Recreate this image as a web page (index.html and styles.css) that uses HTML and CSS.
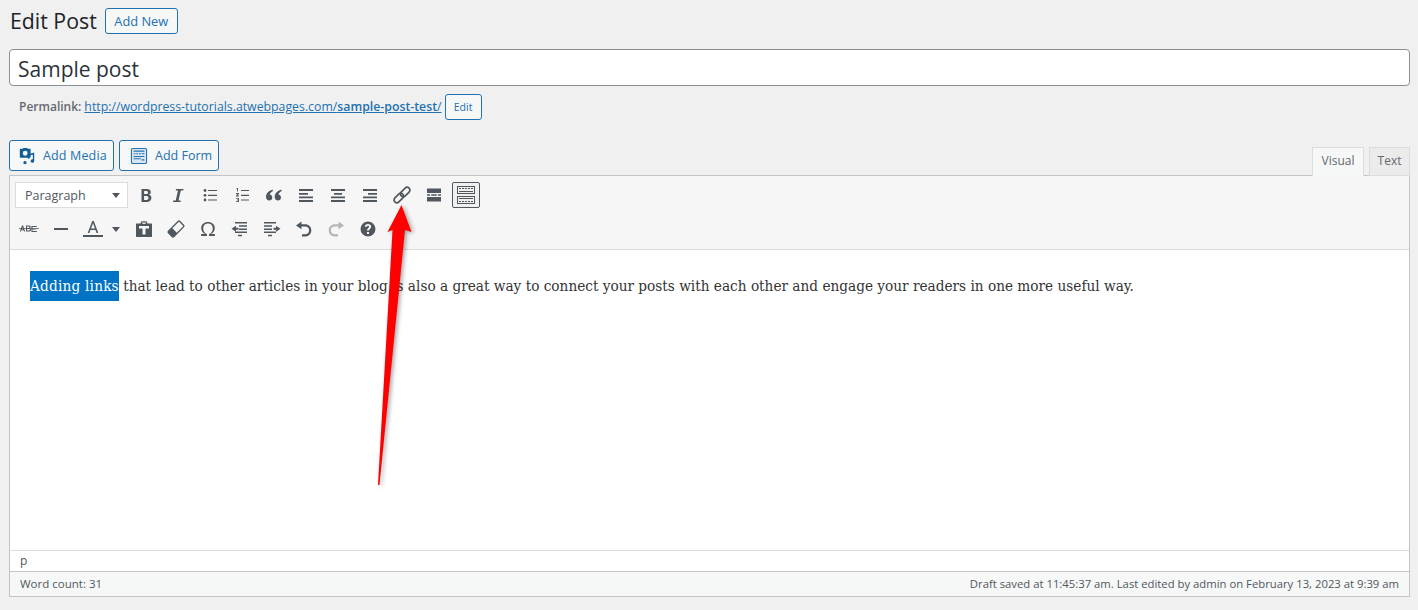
FILE: index.html
```html
<!DOCTYPE html>
<html lang="en">
<head>
<meta charset="utf-8">
<title>Edit Post</title>
<link rel="stylesheet" href="styles.css">
</head>
<body>
<svg class="sprites" width="0" height="0" aria-hidden="true">
  <symbol id="i-bold" viewBox="0 0 20 20"><path fill-rule="evenodd" d="M5.500 4h5.300c2.500 0 4 1.100 4 3.100 0 1.300-.7 2.300-1.900 2.700 1.500.3 2.500 1.400 2.500 3 0 2.600-1.800 4.200-4.500 4.200H5.500zm2.600 2v3h2.100c1.100 0 1.800-.5 1.800-1.500S11.300 6 10.200 6zm0 5v4h2.400c1.300 0 2-.7 2-2s-.7-2-2-2z"/></symbol>
  <symbol id="i-italic" viewBox="0 0 20 20"><path d="M8 4h7.500l-.3 1.500h-2.400L10.500 15.500h2.300l-.3 1.500H5l.3-1.500h2.400L10 5.500H7.700z"/></symbol>
  <symbol id="i-ul" viewBox="0 0 20 20"><circle cx="5" cy="5.500" r="1.400"/><circle cx="5" cy="10.300" r="1.400"/><circle cx="5" cy="15" r="1.400"/><path d="M8 5h9v1.100H8zm0 4.800h9v1.100H8zm0 4.700h9v1.100H8z"/></symbol>
  <symbol id="i-ol" viewBox="0 0 20 20"><path d="M9 5h8v1.100H9zm0 4.800h8v1.100H9zm0 4.700h8v1.100H9zM4.500 3h1.400v3.600H5V4H4.500zM4 8h3v.9L5.400 10.500H7v.9H4v-.9L5.600 8.900H4zm0 5h3v4H4v-.8h2.100v-.8H5v-.8h1.100v-.8H4z"/></symbol>
  <symbol id="i-quote" viewBox="0 0 20 20"><path d="M8.800 4.500C5.400 5.300 2 8 2 11.700 2 14 3.400 15.500 5.300 15.500c1.700 0 3-1.300 3-3 0-1.600-1.100-2.800-2.600-2.900.3-1.400 1.500-2.600 3.100-3.300zm8.700 0c-3.400.8-6.800 3.500-6.800 7.200 0 2.300 1.400 3.800 3.300 3.800 1.700 0 3-1.300 3-3 0-1.600-1.100-2.800-2.600-2.900.3-1.400 1.500-2.600 3.100-3.300z"/></symbol>
  <symbol id="i-left" viewBox="0 0 20 20"><path d="M3 4h14v2H3zm0 4h9v1.700H3zm0 3.500h14v1.700H3zM3 15h14v2H3z"/></symbol>
  <symbol id="i-center" viewBox="0 0 20 20"><path d="M3 4h14v2H3zm3 4h8v1.700H6zm-3 3.500h14v1.700H3zM3 15h14v2H3z"/></symbol>
  <symbol id="i-right" viewBox="0 0 20 20"><path d="M3 4h14v2H3zm5 4h9v1.700H8zm-5 3.500h14v1.700H3zM3 15h14v2H3z"/></symbol>
  <symbol id="i-link" viewBox="0 0 20 20"><g fill="none" stroke="currentColor" stroke-width="1.700"><rect x="-5.500" y="-2.800" width="11" height="5.600" rx="2.800" transform="translate(6.800 13) rotate(-45)"/><rect x="-5.500" y="-2.800" width="11" height="5.600" rx="2.800" transform="translate(13.200 7) rotate(-45)"/></g></symbol>
  <symbol id="i-more" viewBox="0 0 20 20"><path d="M3 3.500h14v4.500H3zM3 12h14v4.500H3zM3 9.300h3.200v1.400H3zm4.300 0h5.400v1.400H7.300zm6.500 0H17v1.400h-3.200z"/></symbol>
  <symbol id="i-kitchen" viewBox="0 0 20 20"><path fill-rule="evenodd" d="M1 1h18v8H1zm1 1v6h16V2zM1 11h18v8H1zm1 1v6h16v-6z"/><path d="M3 3h2v1H3zm3 0h2v1H6zm3 0h2v1H9zm3 0h2v1h-2zm3 0h2v1h-2zM3 6h14v1H3zm0 7h14v1H3zm0 3h2v1H3zm3 0h2v1H6zm3 0h2v1H9zm3 0h2v1h-2zm3 0h2v1h-2z"/></symbol>
  <symbol id="i-abc" viewBox="0 0 20 20"><path d="M2.900 6.500h1.200l2 6H5l-.4-1.300H2.400L2 12.500H.9zm.6 1.500-.8 2.300h1.500zm3.500-1.500h2.700c1.300 0 2 .6 2 1.500 0 .6-.3 1.100-.9 1.300.7.200 1.200.7 1.200 1.400 0 1.100-.8 1.800-2.200 1.800H7zm1.100 1v1.400h1.400c.7 0 1-.3 1-.7s-.3-.7-1-.7zm0 2.300v1.700h1.600c.7 0 1.100-.3 1.100-.8s-.4-.9-1.100-.9zm9.700-2.800v1h-4.300v1.500h3.700v1h-3.700v1.500h4.300v1h-5.400v-6zM0 9.200h20v.9H0z"/></symbol>
  <symbol id="i-hr" viewBox="0 0 20 20"><path d="M3 9h14v2H3z"/></symbol>
  <symbol id="i-color" viewBox="0 0 20 20"><path d="M9.200 2h1.600l4.500 12h-1.700l-1.100-3H7.500l-1.100 3H4.700zm.8 2.200L8 9.600h4zM0 16h20v2H0z"/></symbol>
  <symbol id="i-paste" viewBox="0 0 20 20"><path fill-rule="evenodd" d="M2.500 4.500h4V4l1.200-1.700h4.600L13.500 4v.5h4c.3 0 .5.200.5.500v12.500c0 .3-.2.500-.5.500h-15c-.3 0-.5-.2-.5-.5V5c0-.3.200-.5.500-.5zM5 7v2.500h3.500v6h3v-6H15V7z"/><path fill="#f6f6f6" d="M8.200 3.500h3.600v1.300H8.200z"/></symbol>
  <symbol id="i-eraser" viewBox="0 0 20 20"><g transform="translate(10 10) rotate(-45)"><rect x="-8" y="-3.800" width="16" height="7.600" rx="1.200" fill="none" stroke="currentColor" stroke-width="1.400"/><rect x="-8" y="-3.800" width="6" height="7.600" rx="1"/></g></symbol>
  <symbol id="i-omega" viewBox="0 0 20 20"><path d="M10 3c4 0 6.800 2.500 6.800 6 0 2.800-1.500 4.900-3.800 6.100h3.900V17H11v-1.800c2.400-1 3.800-3.200 3.800-6 0-2.900-1.900-4.700-4.800-4.700S5.200 6.300 5.200 9.200c0 2.800 1.400 5 3.800 6V17H3.100v-1.900H7C4.700 13.900 3.200 11.800 3.200 9 3.200 5.500 6 3 10 3z"/></symbol>
  <symbol id="i-outdent" viewBox="0 0 20 20"><path d="M5 3h12v1.500H5zm4 3.200h8v1.500H9zm0 3.200h8v1.500H9zm-4 3.200h12v1.500H5zm3 3.200h4v1.500H8zM1.500 9.700 6 6.700v2h2.500v2H6v2z"/></symbol>
  <symbol id="i-indent" viewBox="0 0 20 20"><path d="M2 3h12v1.500H2zm0 3.200h8v1.500H2zm0 3.200h8v1.500H2zm0 3.200h12v1.500H2zm4 3.200h4v1.500H6zM18.500 9.700 14 6.700v2h-2.500v2H14v2z"/></symbol>
  <symbol id="i-undo" viewBox="0 0 20 20"><path d="M7.500 2.500v2.800H11c3.700 0 6.300 2.400 6.300 5.900s-2.600 6.300-6.300 6.300H8v-2.200h3c2.400 0 4.100-1.700 4.100-4.100S13.400 7.500 11 7.500H7.500v2.800L2 6.400z"/></symbol>
  <symbol id="i-redo" viewBox="0 0 20 20"><path d="M12.500 2.500v2.800H9c-3.700 0-6.300 2.400-6.300 5.900s2.600 6.300 6.300 6.300h3v-2.200H9c-2.400 0-4.100-1.700-4.100-4.100S6.600 7.500 9 7.500h3.500v2.800L18 6.400z"/></symbol>
  <symbol id="i-help" viewBox="0 0 20 20"><path fill-rule="evenodd" d="M10 2.500a7.500 7.500 0 1 1 0 15 7.500 7.500 0 0 1 0-15zM9 13v2h2v-2zM10 5c-1.900 0-3.100 1-3.200 2.800h2c.1-.7.500-1.100 1.200-1.100s1.100.4 1.100 1c0 1.300-2.100 1.400-2.100 3.800h2c0-1.700 2.200-1.900 2.200-4C13.200 6 11.900 5 10 5z"/></symbol>
  <symbol id="i-media" viewBox="0 0 20 20"><path fill-rule="evenodd" d="M3 2h2l1-1h4l1 1h2c.6 0 1 .4 1 1v8c0 .6-.4 1-1 1H3c-.6 0-1-.4-1-1V3c0-.6.4-1 1-1zm5 2.300a2.700 2.700 0 1 0 0 5.400 2.700 2.700 0 0 0 0-5.400z"/><path d="M18 6v9.500a2 2 0 1 1-1.500-1.900V8.500l-4 1V13h-1.500V8.200zM9.500 17a1.800 1.800 0 1 1-3.500 0 1.800 1.800 0 0 1 3.500 0z"/></symbol>
  <symbol id="i-form" viewBox="0 0 20 20"><rect x="1.500" y="1.500" width="17" height="17" rx="1.800" fill="#d8e6f1"/><path fill-rule="evenodd" d="M3 1h14c1.100 0 2 .9 2 2v14c0 1.100-.9 2-2 2H3c-1.100 0-2-.9-2-2V3c0-1.100.9-2 2-2zm0 1.200c-.4 0-.8.4-.8.8v14c0 .4.4.8.8.8h14c.4 0 .8-.4.8-.8V3c0-.4-.4-.8-.8-.8z"/><path d="M4 4h12v1.400H4zm0 3h2v1H4zm3 0h2v1H7zm3 0h2v1h-2zm3 0h3v1h-3zM4 10h12v1H4zm0 2.500h8v1H4zm9 1h3V15h-3z"/></symbol>
</svg>

<div class="wrap">
  <header class="heading">
    <h1 class="page-title">Edit Post</h1>
    <a class="btn btn-new">Add New</a>
  </header>

  <div class="title-field">Sample post</div>

  <div class="permalink">
    <strong class="permalink-label">Permalink:</strong>
    <a class="permalink-url">http://wordpress-tutorials.atwebpages.com/<span class="slug">sample-post-test</span>/</a>
    <a class="btn btn-edit">Edit</a>
  </div>

  <div class="editor-tools">
    <div class="media-buttons">
      <a class="btn btn-media"><svg class="media-icon"><use href="#i-media"/></svg>Add Media</a>
      <a class="btn btn-media btn-form"><svg class="media-icon"><use href="#i-form"/></svg>Add Form</a>
    </div>
    <div class="tabs">
      <span class="tab tab-active">Visual</span>
      <span class="tab">Text</span>
    </div>
  </div>

  <div class="editor">
    <div class="toolbar">
      <div class="tool-row">
        <div class="format-select"><span>Paragraph</span><i class="caret"></i></div>
        <span class="tool"><svg class="ico"><use href="#i-bold"/></svg></span>
        <span class="tool"><svg class="ico"><use href="#i-italic"/></svg></span>
        <span class="tool"><svg class="ico"><use href="#i-ul"/></svg></span>
        <span class="tool"><svg class="ico"><use href="#i-ol"/></svg></span>
        <span class="tool"><svg class="ico"><use href="#i-quote"/></svg></span>
        <span class="tool"><svg class="ico"><use href="#i-left"/></svg></span>
        <span class="tool"><svg class="ico"><use href="#i-center"/></svg></span>
        <span class="tool"><svg class="ico"><use href="#i-right"/></svg></span>
        <span class="tool"><svg class="ico"><use href="#i-link"/></svg></span>
        <span class="tool"><svg class="ico"><use href="#i-more"/></svg></span>
        <span class="tool tool-active"><svg class="ico"><use href="#i-kitchen"/></svg></span>
      </div>
      <div class="tool-row">
        <span class="tool"><svg class="ico"><use href="#i-abc"/></svg></span>
        <span class="tool"><svg class="ico"><use href="#i-hr"/></svg></span>
        <span class="tool tool-split"><svg class="ico"><use href="#i-color"/></svg><i class="caret"></i></span>
        <span class="tool"><svg class="ico"><use href="#i-paste"/></svg></span>
        <span class="tool"><svg class="ico"><use href="#i-eraser"/></svg></span>
        <span class="tool"><svg class="ico"><use href="#i-omega"/></svg></span>
        <span class="tool"><svg class="ico"><use href="#i-outdent"/></svg></span>
        <span class="tool"><svg class="ico"><use href="#i-indent"/></svg></span>
        <span class="tool"><svg class="ico"><use href="#i-undo"/></svg></span>
        <span class="tool tool-disabled"><svg class="ico"><use href="#i-redo"/></svg></span>
        <span class="tool"><svg class="ico"><use href="#i-help"/></svg></span>
      </div>
    </div>
    <div class="content">
      <p class="body-text"><span class="selected">Adding links</span> that lead to other articles in your blog is also a great way to connect your posts with each other and engage your readers in one more useful way.</p>
    </div>
    <div class="path">p</div>
    <div class="status">
      <span>Word count: 31</span>
      <span class="status-right">Draft saved at 11:45:37 am. Last edited by admin on February 13, 2023 at 9:39 am</span>
    </div>
  </div>
</div>

<svg class="arrow" viewBox="0 0 1418 610" aria-hidden="true">
  <polygon points="401.500,205 411.500,232 405,230 379.500,485 378,485 392.500,230 387.500,232" fill="#ff0000"/>
</svg>
</body>
</html>
```

FILE: styles.css
```css
* { box-sizing: border-box; }

html, body {
  margin: 0;
  height: 610px;
  overflow: hidden;
  background: #f0f0f1;
}

body {
  position: relative;
  font-family: "Open Sans", "Noto Sans", sans-serif;
  font-size: 13px;
  color: #3c434a;
}

.sprites { position: absolute; }

.wrap { padding: 8px 8px 0 9px; }

.heading {
  display: flex;
  align-items: center;
  height: 26px;
  gap: 8px;
}

.page-title {
  margin: 0 0 0 1px;
  font-size: 21.300px;
  font-weight: 400;
  line-height: 26px;
  color: #1d2327;
}

.btn {
  display: inline-flex;
  align-items: center;
  border: 1px solid #2271b1;
  border-radius: 3px;
  background: #f6f7f7;
  color: #2271b1;
}

.btn-new {
  height: 26px;
  width: 73px;
  justify-content: center;
  font-size: 12.800px;
  font-weight: 500;
}

.title-field {
  margin-top: 15px;
  height: 37px;
  padding-left: 8px;
  border: 1px solid #8c8f94;
  border-radius: 4px;
  background: #fff;
  font-size: 21px;
  line-height: 39px;
  color: #2c3338;
}

.permalink {
  display: flex;
  align-items: center;
  height: 26px;
  margin-top: 8px;
  padding-left: 10px;
  font-size: 12.300px;
  color: #646970;
}

.permalink-label { font-size: 12px; font-weight: 600; margin-right: 3px; margin-bottom: 2px; }

.permalink-url { color: #2271b1; text-decoration: underline; margin-bottom: 2px; }

.slug { font-weight: 600; }

.btn-edit {
  height: 26px;
  width: 37px;
  margin-left: 3px;
  justify-content: center;
  font-size: 10.500px;
}

.editor-tools {
  display: flex;
  justify-content: space-between;
  align-items: flex-end;
  margin-top: 20px;
  height: 35px;
}

.media-buttons {
  display: flex;
  gap: 5px;
  align-self: flex-start;
}

.btn-media {
  height: 31px;
  width: 105px;
  padding-left: 8px;
  gap: 7px;
  font-size: 12.500px;
  letter-spacing: .15px;
}

.btn-form { width: 100px; gap: 7px; padding-left: 10px; letter-spacing: 0; }

.media-icon { width: 18px; height: 18px; fill: #2271b1; }

.btn-media:first-child .media-icon { fill: #135e96; }

.tabs {
  display: flex;
  gap: 5px;
  margin-bottom: -1px;
  position: relative;
}

.tab {
  display: flex;
  align-items: center;
  justify-content: center;
  width: 41px;
  height: 29px;
  padding-bottom: 2px;
  border: 1px solid #dcdcde;
  background: #ebebec;
  font-size: 12px;
  color: #646970;
}

.tab-active {
  width: 52px;
  background: #f6f7f7;
  border-color: #dcdcde #dcdcde #f6f7f7;
}

.editor {
  height: 422px;
  border: 1px solid #c3c4c7;
  display: flex;
  flex-direction: column;
  background: #fff;
}

.toolbar {
  display: flex;
  flex-direction: column;
  gap: 6px;
  height: 74px;
  padding: 5px 0 0 5px;
  background: #f6f6f6;
  border-bottom: 1px solid #dcdcde;
}

.tool-row { display: flex; gap: 4px; height: 28px; align-items: center; }

.format-select {
  display: flex;
  align-items: center;
  justify-content: space-between;
  width: 113px;
  height: 26px;
  padding: 0 7px 0 9px;
  border: 1px solid #dcdcde;
  background: #fff;
  font-size: 12.500px;
  color: #50575e;
}

.caret {
  width: 0;
  height: 0;
  border-left: 4px solid transparent;
  border-right: 4px solid transparent;
  border-top: 5px solid #50575e;
}

.tool {
  display: flex;
  align-items: center;
  justify-content: center;
  width: 28px;
  height: 28px;
  color: #50575e;
}

.tool-active {
  height: 26px;
  border: 1px solid #50575e;
  border-radius: 2px;
  background: #f0f0f1;
}

.tool-split { width: 47px; justify-content: flex-start; padding-left: 4px; gap: 9px; }

.tool-disabled { color: #b4b6b8; }

.ico { width: 20px; height: 20px; fill: currentColor; }

.content { flex: 1; padding: 21px 20px 0; }

.body-text {
  margin: 0;
  font-family: "DejaVu Serif Condensed", "DejaVu Serif", serif;
  font-stretch: condensed;
  font-size: 15.200px;
  line-height: 30px;
  color: #333;
}

.selected { display: inline-block; letter-spacing: .2px; background: #0073c4; color: #fff; }

.path {
  height: 21px;
  padding-left: 10px;
  border-top: 1px solid #dcdcde;
  font-size: 12px;
  line-height: 20px;
  color: #50575e;
}

.status {
  display: flex;
  justify-content: space-between;
  height: 25px;
  padding: 0 10px;
  border-top: 1px solid #c3c4c7;
  background: #f6f7f7;
  font-size: 11.500px;
  line-height: 23px;
  color: #50575e;
}

.status-right { font-size: 11.300px; }

.arrow {
  position: absolute;
  left: 0;
  top: 0;
  width: 1418px;
  height: 610px;
  pointer-events: none;
  filter: drop-shadow(2px 1px 2px rgba(0, 0, 0, .35));
}
```
